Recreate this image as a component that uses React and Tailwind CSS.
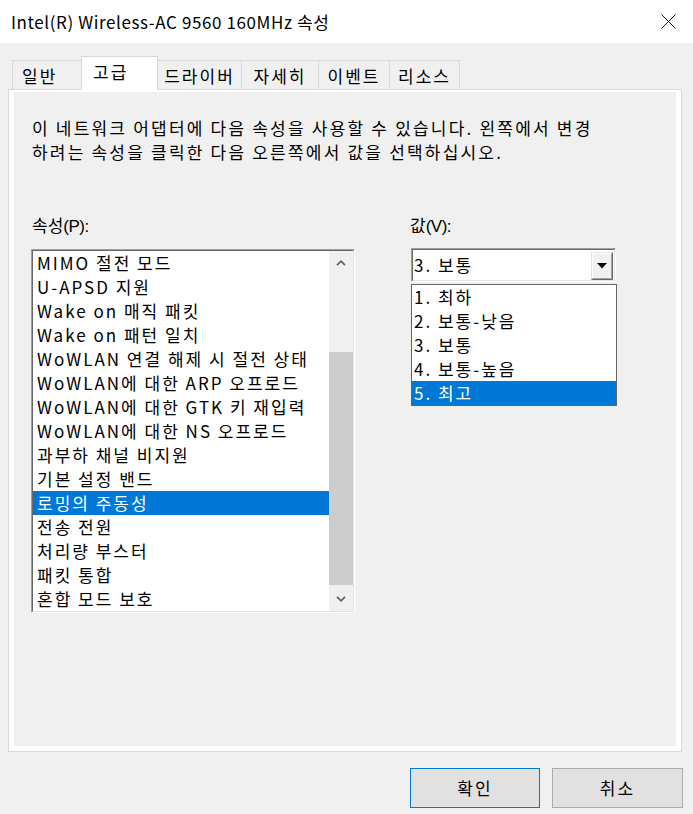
import React from "react";

const properties = [
  "MIMO 절전 모드",
  "U-APSD 지원",
  "Wake on 매직 패킷",
  "Wake on 패턴 일치",
  "WoWLAN 연결 해제 시 절전 상태",
  "WoWLAN에 대한 ARP 오프로드",
  "WoWLAN에 대한 GTK 키 재입력",
  "WoWLAN에 대한 NS 오프로드",
  "과부하 채널 비지원",
  "기본 설정 밴드",
  "로밍의 주동성",
  "전송 전원",
  "처리량 부스터",
  "패킷 통합",
  "혼합 모드 보호",
];

const values = ["1. 최하", "2. 보통-낮음", "3. 보통", "4. 보통-높음", "5. 최고"];

const tabs = [
  { label: "일반", cls: "w-[69px] h-[30px] pl-[9px] border-l border-t" },
  { label: "고급", cls: "w-[77px] h-[34px] pl-[11px] pb-[4px] border-l border-t border-r bg-white" },
  { label: "드라이버", cls: "w-[83px] h-[30px] justify-center border-t" },
  { label: "자세히", cls: "w-[77px] h-[30px] justify-center border-l border-t" },
  { label: "이벤트", cls: "w-[71px] h-[30px] justify-center border-l border-t" },
  { label: "리소스", cls: "w-[71px] h-[30px] justify-center border-l border-t border-r" },
];

const Chevron = ({ up }) => (
  <svg width="10" height="6" viewBox="0 0 10 6" aria-hidden="true">
    <polyline
      points={up ? "1,5.2 5,1.2 9,5.2" : "1,0.8 5,4.8 9,0.8"}
      fill="none"
      stroke="#606060"
      strokeWidth="1.7"
    />
  </svg>
);

const TitleBar = () => (
  <div className="h-[43px] bg-white flex items-center justify-between pl-[11px] pr-[17px]">
    <span className="text-[17px] tracking-[0.6px]">Intel(R) Wireless-AC 9560 160MHz 속성</span>
    <svg width="15" height="15" viewBox="0 0 15 15" aria-hidden="true">
      <path d="M0.5 0.5 L14.5 14.5 M14.5 0.5 L0.5 14.5" stroke="#111" strokeWidth="1" />
    </svg>
  </div>
);

const Tabs = () => (
  <div className="flex items-end pl-[12px] pt-[13px] -mb-px relative z-10">
    {tabs.map((t) => (
      <div key={t.label} className={`flex items-center border-[#d9d9d9] ${t.cls}`}>
        {t.label}
      </div>
    ))}
  </div>
);

// "(P):" style mnemonic suffix drawn narrower, like the system font
const Suffix = ({ children }) => (
  <span className="font-['Liberation_Sans',sans-serif] tracking-[-0.5px]">{children}</span>
);

const ListBox = () => (
  <div className="mt-[12px] w-[324px] h-[364px] border border-t-[#a0a0a0] border-l-[#a0a0a0] border-b-white border-r-white">
    <div className="h-full border border-t-[#696969] border-l-[#696969] border-b-[#e3e3e3] border-r-[#e3e3e3] bg-white flex">
      <ul className="flex-1">
        {properties.map((p) => (
          <li
            key={p}
            className={`h-[24px] leading-[24px] pl-[4px] whitespace-nowrap ${
              p === "로밍의 주동성" ? "bg-[#0078d7] text-white" : ""
            }`}
          >
            {p}
          </li>
        ))}
      </ul>
      <div className="w-[24px] bg-[#f0f0f0] flex flex-col">
        <div className="h-[24px] flex items-center justify-center">
          <Chevron up />
        </div>
        <div className="h-[77px]" />
        <div className="h-[233px] bg-[#cdcdcd]" />
        <div className="h-[2px]" />
        <div className="h-[24px] flex items-center justify-center">
          <Chevron />
        </div>
      </div>
    </div>
  </div>
);

const ComboBox = () => (
  <div className="mt-[11px] w-[205px] h-[34px] border border-t-[#a0a0a0] border-l-[#a0a0a0] border-b-white border-r-white">
    <div className="h-full border border-t-[#696969] border-l-[#696969] border-b-[#e3e3e3] border-r-[#e3e3e3] bg-white flex">
      <span className="pl-[1px] leading-[30px]">3. 보통</span>
      <div className="ml-auto mt-[2px] mr-[1px] w-[22px] h-[28px] border border-t-[#e3e3e3] border-l-[#e3e3e3] border-b-[#696969] border-r-[#696969]">
        <div className="h-full border border-t-white border-l-white border-b-[#a0a0a0] border-r-[#a0a0a0] bg-[#f0f0f0] flex items-center justify-center">
          <svg width="10" height="6" viewBox="0 0 10 6" aria-hidden="true">
            <polygon points="0,0 10,0 5,5.5" fill="#000" />
          </svg>
        </div>
      </div>
    </div>
  </div>
);

const DropList = () => (
  <ul className="mt-[2px] w-[206px] border border-[#646464] bg-white">
    {values.map((v) => (
      <li
        key={v}
        className={`h-[24px] leading-[24px] pl-[2px] ${
          v === "5. 최고" ? "bg-[#0078d7] text-white" : ""
        }`}
      >
        {v}
      </li>
    ))}
  </ul>
);

export default function App() {
  return (
    <div className="w-[693px] h-[814px] overflow-hidden bg-[#f0f0f0] text-black text-[17px] tracking-[2px] font-['Noto_Sans_CJK_KR',sans-serif] flex flex-col">
      <TitleBar />
      <Tabs />
      <div className="ml-[8px] w-[674px] h-[663px] border border-[#d9d9d9] bg-white pt-[2px] px-[5px] pb-[5px]">
        <div className="h-full bg-[#f0f0f0] pl-[17px] pt-[24px]">
          <p className="pl-[1px] leading-[24px] tracking-[2.2px] whitespace-nowrap">
            이 네트워크 어댑터에 다음 속성을 사용할 수 있습니다. 왼쪽에서 변경
            <br />
            하려는 속성을 클릭한 다음 오른쪽에서 값을 선택하십시오.
          </p>
          <div className="mt-[49px] flex gap-[56px]">
            <div className="w-[324px]">
              <div className="h-[24px] leading-[24px] pl-[1px] tracking-[0px]">
                속성<Suffix>(P):</Suffix>
              </div>
              <ListBox />
            </div>
            <div className="w-[206px]">
              <div className="h-[24px] leading-[24px] -ml-px tracking-[0px]">
                값<Suffix>(V):</Suffix>
              </div>
              <ComboBox />
              <DropList />
            </div>
          </div>
        </div>
      </div>
      <div className="mt-[16px] flex justify-end gap-[12px] pr-[10px]">
        <button className="w-[130px] h-[40px] border border-[#0078d7] bg-[#e1e1e1]">확인</button>
        <button className="w-[131px] h-[40px] border border-[#adadad] bg-[#e1e1e1]">취소</button>
      </div>
    </div>
  );
}
